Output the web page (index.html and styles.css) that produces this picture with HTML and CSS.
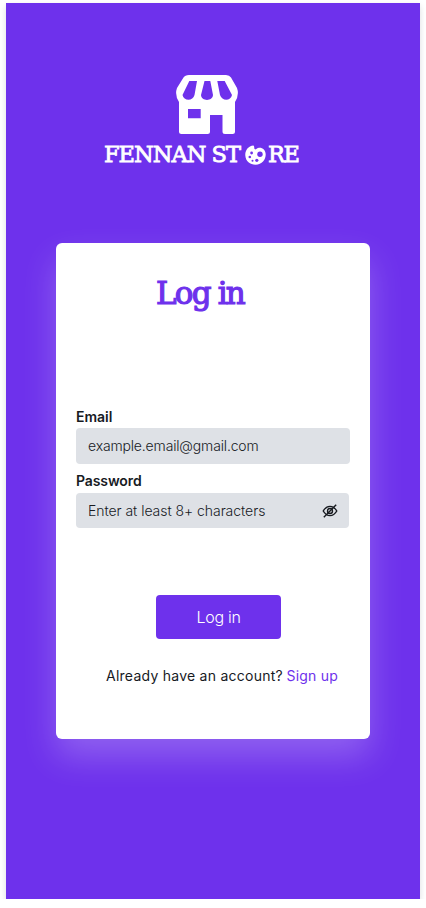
FILE: index.html
```html
<!DOCTYPE html>
<html lang="en">
<head>
<meta charset="utf-8">
<title>Fennan Store - Log in</title>
<link rel="stylesheet" href="styles.css">
</head>
<body>
<main class="screen">
  <header class="brand">
    <svg class="shop" viewBox="6 7 62 59" aria-hidden="true">
      <path fill="#fff" fill-rule="evenodd" d="M19 7H56Q59.500 7 61 9.500L67 20Q69.500 27 65 34V63.500Q65 66 62.500 66H55Q52.500 66 52.500 63.500V47H40V63.500Q40 66 37.500 66H11.500Q9 66 9 63.500V34Q4.500 27 7 20L13.500 9.500Q15 7 19 7ZM19.300 13L12.500 27C13.500 33 23 33.500 24.500 27L27 13ZM34.500 13L31 27C31.500 33.500 42.500 33.500 43 27L40.300 13ZM47.300 13L50 27C52 33.500 61 33 62 27L54.700 13ZM18 41V50.300H30.700V41Z"/>
    </svg>
    <div class="wordmark">
      <span class="word word-start">FENNAN ST</span>
      <svg class="palette" viewBox="0 0 21 20" aria-hidden="true">
        <path fill="#fff" d="M8.500 .5C3 1 0 5.500 .3 10.500C.7 16.500 5 19.700 10.500 19.700C17 19.700 20.700 14.500 20.700 9.500C20.700 5 17.500 2.500 14 2.800C12 3 11.500 4.800 10 4.300C8.700 3.800 9.800 1.500 8.500 .5Z"/>
        <g fill="#6e31ec"><circle cx="15" cy="9.300" r="2.700"/><circle cx="6.600" cy="8" r="1.400"/><circle cx="4.800" cy="12" r="1.300"/><circle cx="11.800" cy="15.300" r="1.600"/><circle cx="7.500" cy="15.700" r="1"/></g>
      </svg>
      <span class="word word-end">RE</span>
    </div>
  </header>
  <section class="card">
    <h1 class="title">Log in</h1>
    <div class="field">
      <span class="label label-email">Email</span>
      <div class="box"><span class="hint hint-email">example.email@gmail.com</span></div>
    </div>
    <div class="field field-password">
      <span class="label label-password">Password</span>
      <div class="box">
        <span class="hint hint-password">Enter at least 8+ characters</span>
        <svg class="eye" viewBox="0 0 16 16" fill="none" stroke="#171a1f" stroke-width="1.400" aria-hidden="true">
          <path d="M1.200 8Q4 3.400 8 3.400T14.800 8Q12 12.600 8 12.600T1.200 8Z"/><circle cx="8" cy="8" r="2.500"/><path d="M1.800 14.200L14.200 1.800"/>
        </svg>
      </div>
    </div>
    <button class="submit" type="button"><span class="submit-text">Log in</span></button>
    <p class="switch"><span class="question">Already have an account?</span><a class="signup">Sign up</a></p>
  </section>
</main>
</body>
</html>
```
FILE: styles.css
```css
* { box-sizing: border-box; }
body { margin: 0; background: #fff; font-family: Inter, "Liberation Sans", sans-serif; color: #171a1f; }
.screen {
  width: 414px; height: 896px; margin: 3px 0 0 6px; padding-top: 72px;
  background: #6e31ec; box-shadow: 0 3px 6px rgba(23, 26, 31, .15);
}
.brand { height: 168px; }
.shop { display: block; width: 62px; height: 59px; margin-left: 170px; }
.wordmark { display: flex; height: 34px; margin: 3px 0 0 98px; color: #fff; }
.word { font: 22.5px/34px "DejaVu Serif", serif; white-space: nowrap; -webkit-text-stroke: .8px #fff; }
.word-start { width: 141px; letter-spacing: -1px; }
.word-end { letter-spacing: -1.4px; margin-left: 2px; }
.palette { width: 21px; height: 20px; margin-top: 8px; flex: none; }
.card {
  display: flow-root; width: 314px; height: 496px; margin-left: 50px; padding: 0 20px;
  background: #fff; border-radius: 6px; box-shadow: 0 17px 35px rgba(255, 255, 255, .24);
}
.title {
  margin: 30px 0 0 80px; height: 134px; color: #6e31ec; white-space: nowrap;
  font: 31px/40px "DejaVu Serif", serif; -webkit-text-stroke: 1.2px #6e31ec; letter-spacing: -1.8px;
}
.field { height: 57px; }
.field-password { margin-top: 8px; width: 273px; height: 110px; }
.label { display: block; height: 21px; font-size: 14px; line-height: 20px; font-weight: 600; }
.label-password { line-height: 18px; letter-spacing: -.1px; }
.box {
  display: flex; align-items: center; justify-content: space-between; height: 36px;
  padding: 0 11px 0 12px; background: #dee1e6; border-radius: 4px;
}
.field-password .box { height: 35px; }
.hint { font-size: 14px; font-weight: 300; white-space: nowrap; }
.hint-email { letter-spacing: -.16px; padding-bottom: 2px; }
.hint-password { letter-spacing: -.04px; }
.eye { width: 16px; height: 16px; }
.submit {
  display: block; width: 125px; height: 44px; margin: 13px 0 0 80px; padding: 0;
  border: 0; border-radius: 4px; background: #6e31ec; color: #fff;
  font: 300 16px/44px Inter, sans-serif; letter-spacing: -.3px;
}
.switch { display: flex; margin: 27px 0 0 30px; font-size: 14px; line-height: 20px; white-space: nowrap; }
.question { width: 180.5px; letter-spacing: .25px; }
.signup { color: #6e31ec; letter-spacing: .2px; }
```
